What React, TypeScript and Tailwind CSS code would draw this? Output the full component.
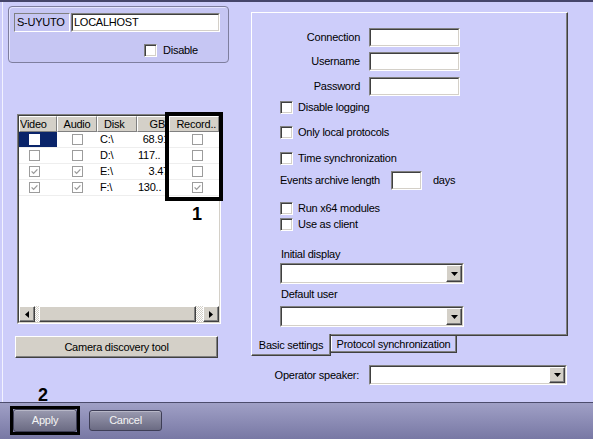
import React from "react";

const sunkOuter = "border border-t-[#808080] border-l-[#808080] border-b-white border-r-white";
const sunkInner = "border border-t-[#404040] border-l-[#404040] border-b-[#d4d0c8] border-r-[#d4d0c8]";
const raised =
  "bg-[#d4d0c8] border border-t-white border-l-white border-b-[#404040] border-r-[#404040] shadow-[inset_-1px_-1px_0_#808080]";

function TriDown() {
  return (
    <svg width="7" height="4" viewBox="0 0 7 4">
      <polygon points="0,0 7,0 3.5,4" fill="#000" />
    </svg>
  );
}
function TriLeft() {
  return (
    <svg width="4" height="7" viewBox="0 0 4 7">
      <polygon points="4,0 4,7 0,3.5" fill="#000" />
    </svg>
  );
}
function TriRight() {
  return (
    <svg width="4" height="7" viewBox="0 0 4 7">
      <polygon points="0,0 0,7 4,3.5" fill="#000" />
    </svg>
  );
}

function Check13() {
  return (
    <div className="w-[13px] h-[13px] shrink-0 bg-white border border-t-[#808080] border-l-[#808080] border-b-white border-r-white shadow-[inset_1px_1px_0_#404040,inset_-1px_-1px_0_#d4d0c8]" />
  );
}

function TCheck({ checked, sel }: { checked?: boolean; sel?: boolean }) {
  return (
    <div
      className={`w-[11px] h-[11px] bg-white border flex items-center justify-center ${
        sel ? "border-white" : "border-[#9c9c9c]"
      }`}
    >
      {checked && (
        <svg width="7" height="7" viewBox="0 0 7 7">
          <path d="M0.6 3.4 L2.6 5.4 L6.4 1.4" stroke="#9a9a9a" strokeWidth="1.3" fill="none" />
        </svg>
      )}
    </div>
  );
}

function Input({ w }: { w: string }) {
  return (
    <div className={`${sunkOuter} ${w} h-[19px] shrink-0`}>
      <div className={`${sunkInner} bg-white w-full h-full`} />
    </div>
  );
}

function Combo({ w, h }: { w: string; h: string }) {
  return (
    <div className={`${sunkOuter} ${w} ${h} shrink-0`}>
      <div className={`${sunkInner} bg-white w-full h-full flex justify-end`}>
        <div className={`${raised} w-[16px] h-full flex items-center justify-center`}>
          <TriDown />
        </div>
      </div>
    </div>
  );
}

const rows = [
  { v: false, a: false, d: "C:\\", gb: "68.91", gl: false, r: false, sel: true },
  { v: false, a: false, d: "D:\\", gb: "117..", gl: true, r: false, sel: false },
  { v: true, a: true, d: "E:\\", gb: "3.47", gl: false, r: false, sel: false },
  { v: true, a: true, d: "F:\\", gb: "130..", gl: true, r: true, sel: false },
];

const hdr =
  "h-full bg-[#d4d0c8] border border-t-white border-l-white border-r-[#808080] border-b-[#808080] flex items-center overflow-hidden whitespace-nowrap";

function Btn({ children, cls }: { children: React.ReactNode; cls: string }) {
  return (
    <div
      className={`${cls} rounded-[3px] border border-[#3e3e56] bg-linear-to-b from-[#9a9ab0] to-[#6b6b83] text-[#f4f4f4] flex items-center justify-center shadow-[inset_0_1px_0_rgba(255,255,255,0.3)]`}
    >
      {children}
    </div>
  );
}

function Table() {
  return (
    <div className="relative ml-[14px] mt-[51px] w-[204px] h-[210px] shrink-0">
      <div className={`${sunkOuter} w-full h-full`}>
        <div className={`${sunkInner} w-full h-full bg-white flex flex-col`}>
          <div className="grid grid-cols-[38px_40px_40px_32px_50px] h-[16px] shrink-0">
            <div className={`${hdr} pl-[0px]`}>Video</div>
            <div className={`${hdr} justify-center`}>Audio</div>
            <div className={`${hdr} pl-[6px]`}>Disk</div>
            <div className={`${hdr} justify-end pr-[3px]`}>GB</div>
            <div className={`${hdr} justify-end pr-[2px]`}>Record..</div>
          </div>
          {rows.map((r, i) => (
            <div
              key={i}
              className="grid grid-cols-[38px_40px_40px_32px_50px] h-[16px] shrink-0 border-b border-[#eeeeee]"
            >
              <div className={`flex items-center pl-[10px] ${r.sel ? "bg-[#0a246a]" : ""}`}>
                <TCheck checked={r.v} sel={r.sel} />
              </div>
              <div className="flex items-center pl-[15px]">
                <TCheck checked={r.a} />
              </div>
              <div className="flex items-center pl-[3px]">{r.d}</div>
              <div
                className={`flex items-center overflow-hidden whitespace-nowrap ${
                  r.gl ? "pl-[1px]" : "justify-end pr-[0px]"
                }`}
              >
                {r.gb}
              </div>
              <div className="flex items-center pl-[23px]">
                <TCheck checked={r.r} />
              </div>
            </div>
          ))}
          <div className="flex-1" />
          <div className="flex h-[16px] shrink-0">
            <div className={`${raised} w-[16px] h-full flex items-center justify-center`}>
              <TriLeft />
            </div>
            <div className="flex-1 flex pl-[4px] pr-[7px] bg-[image:repeating-conic-gradient(#d4d0c8_0%_25%,#ffffff_0%_50%)] bg-[length:2px_2px]">
              <div className={`${raised} flex-1 h-full`} />
            </div>
            <div className={`${raised} w-[16px] h-full flex items-center justify-center`}>
              <TriRight />
            </div>
          </div>
        </div>
      </div>
      <div className="absolute left-[148px] top-[-2px] w-[58px] h-[89px] border-4 border-black" />
      <div className="absolute left-[175px] top-[91px] text-[18px] font-bold tracking-normal leading-none">1</div>
    </div>
  );
}

export default function App() {
  return (
    <div className="w-[593px] h-[439px] overflow-hidden flex flex-col bg-[#cdcdfa] text-[11px] tracking-[-0.25px] leading-none text-black font-['Liberation_Sans',Arial,sans-serif] select-none">
      <div className="h-[2px] shrink-0 bg-[#45456a]" />
      <div className="flex h-[400px] shrink-0 pl-[2px]">
        {/* Left column */}
        <div className="relative w-[249px] shrink-0 border-l border-[#f2f2ff] flex flex-col">
          <div className="ml-[5px] mt-[4px] w-[221px] h-[57px] shrink-0 rounded-[4px] border border-[#7e7e9e] bg-[#c6c6f3] shadow-[inset_1px_1px_0_#e4e4ff]">
            <div className="flex mt-[6px] ml-[5px]">
              <div className={`${sunkOuter} w-[56px] h-[19px] flex items-center pl-[2px] bg-[#c6c6f3]`}>
                S-UYUTO
              </div>
              <div className={`${sunkOuter} ml-[1px] w-[149px] h-[19px]`}>
                <div className={`${sunkInner} bg-white w-full h-full flex items-center pl-[1px]`}>LOCALHOST</div>
              </div>
            </div>
            <div className="flex items-center mt-[12px] ml-[135px]">
              <Check13 />
              <div className="ml-[6px]">Disable</div>
            </div>
          </div>

          <Table />

          <div className={`${raised} ml-[12px] mt-[12px] w-[203px] h-[22px] shrink-0 flex items-center justify-center`}>
            Camera discovery tool
          </div>

          <div className="absolute left-[35px] top-[384px] text-[18px] font-bold tracking-normal leading-none">2</div>
        </div>

        {/* Right column */}
        <div className="flex flex-col">
          <div className="mt-[10px] w-[317px] h-[324px] shrink-0 border border-t-white border-l-white border-b-[#404040] border-r-[#404040] shadow-[inset_-1px_-1px_0_#808080] pl-[28px] flex flex-col">
            <div className="flex items-center mt-[15px] h-[19px]">
              <div className="w-[80px] text-right">Connection</div>
              <div className="ml-[9px]">
                <Input w="w-[91px]" />
              </div>
            </div>
            <div className="flex items-center mt-[5px] h-[19px]">
              <div className="w-[80px] text-right">Username</div>
              <div className="ml-[9px]">
                <Input w="w-[91px]" />
              </div>
            </div>
            <div className="flex items-center mt-[6px] h-[19px]">
              <div className="w-[80px] text-right">Password</div>
              <div className="ml-[9px]">
                <Input w="w-[91px]" />
              </div>
            </div>
            <div className="flex items-center mt-[5px] h-[13px]">
              <Check13 />
              <div className="ml-[5px]">Disable logging</div>
            </div>
            <div className="flex items-center mt-[12px] h-[13px]">
              <Check13 />
              <div className="ml-[5px]">Only local protocols</div>
            </div>
            <div className="flex items-center mt-[13px] h-[13px]">
              <Check13 />
              <div className="ml-[5px]">Time synchronization</div>
            </div>
            <div className="flex items-center mt-[6px] h-[19px]">
              <div className="w-[111px]">Events archive length</div>
              <Input w="w-[31px]" />
              <div className="ml-[11px]">days</div>
            </div>
            <div className="flex items-center mt-[12px] h-[13px]">
              <Check13 />
              <div className="ml-[5px]">Run x64 modules</div>
            </div>
            <div className="flex items-center mt-[3px] h-[13px]">
              <Check13 />
              <div className="ml-[5px]">Use as client</div>
            </div>
            <div className="mt-[17px] h-[13px] flex items-center pl-[1px]">Initial display</div>
            <div className="mt-[2px]">
              <Combo w="w-[184px]" h="h-[21px]" />
            </div>
            <div className="mt-[4px] h-[13px] flex items-center pl-[1px]">Default user</div>
            <div className="mt-[5px]">
              <Combo w="w-[184px]" h="h-[21px]" />
            </div>
          </div>

          <div className="relative -mt-[2px] flex items-start">
            <div className="h-[22px] w-[80px] bg-[#cdcdfa] border-l border-r border-b border-l-white border-r-[#404040] border-b-[#404040] shadow-[inset_-1px_-1px_0_#808080] flex items-center justify-center pt-[1px]">
              Basic settings
            </div>
            <div className="mt-[2px] h-[17px] w-[126px] border-r border-b border-r-[#404040] border-b-[#404040] shadow-[inset_-1px_-1px_0_#808080,inset_1px_0_0_#ffffff] flex items-center justify-center pt-[1px]">
              Protocol synchronization
            </div>
          </div>

          <div className="flex items-center mt-[9px]">
            <div className="w-[108px] text-right">Operator speaker:</div>
            <div className="ml-[10px]">
              <Combo w="w-[198px]" h="h-[20px]" />
            </div>
          </div>
        </div>
      </div>

      {/* Bottom bar */}
      <div className="h-[37px] shrink-0 border-t border-[#4c4c6c] bg-linear-to-b from-[#a0a0c6] to-[#7878a4] flex items-start pl-[10px]">
        <div className="mt-[3px] w-[70px] h-[29px] border-[3px] border-black">
          <Btn cls="w-full h-full">Apply</Btn>
        </div>
        <Btn cls="ml-[9px] mt-[7px] w-[73px] h-[21px]">Cancel</Btn>
      </div>
    </div>
  );
}
